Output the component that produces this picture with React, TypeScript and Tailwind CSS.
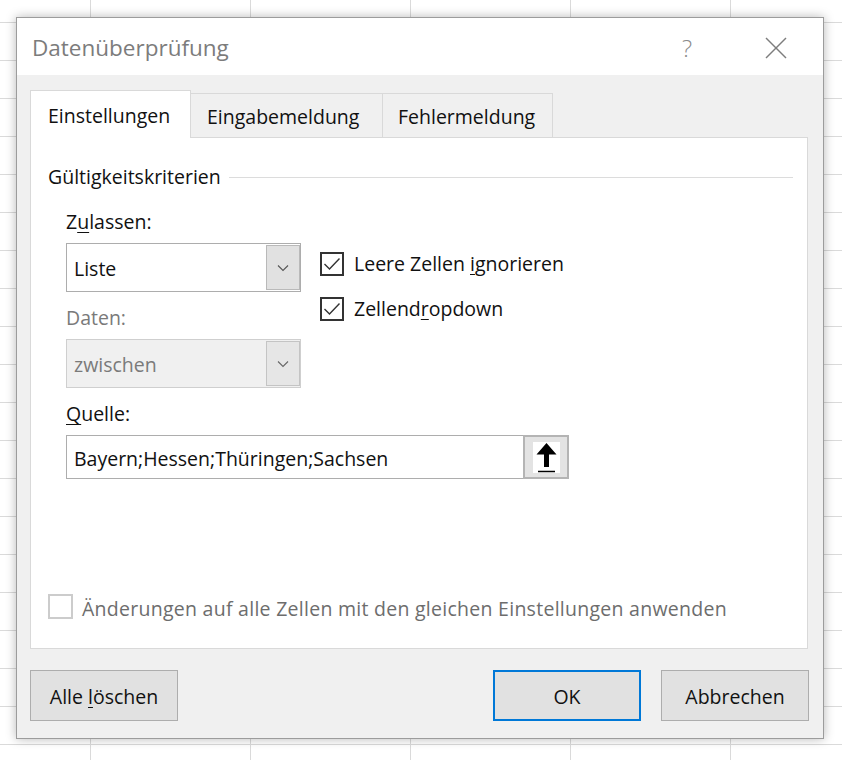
import React from "react";

function Chevron({ color = "#555" }: { color?: string }) {
  return (
    <svg width="12" height="8" viewBox="0 0 12 8">
      <polyline points="1,1.5 6,6.5 11,1.5" fill="none" stroke={color} strokeWidth="1.1" />
    </svg>
  );
}

function Combo({ value, disabled }: { value: string; disabled?: boolean }) {
  return (
    <div
      className={`flex h-[49px] w-[235px] items-stretch border ${
        disabled ? "border-[#cfcfcf] bg-[#f0f0f0]" : "border-[#adadad] bg-white"
      }`}
    >
      <div className={`flex flex-1 items-center pl-[7px] pt-[3px] ${disabled ? "text-[#7a7a7a]" : "text-[#111]"}`}>{value}</div>
      <div
        className={`my-[1px] flex w-[34px] items-center justify-center border ${
          disabled ? "border-[#c4c4c4] bg-[#e6e6e6]" : "border-[#b9b9b9] bg-[#e1e1e1]"
        }`}
      >
        <Chevron color={disabled ? "#666" : "#555"} />
      </div>
    </div>
  );
}

function CheckBox({ checked }: { checked: boolean }) {
  return (
    <div className="flex h-[24px] w-[24px] items-center justify-center border-2 border-[#333] bg-white">
      {checked && (
        <svg width="20" height="20" viewBox="0 0 20 20">
          <polyline points="2.5,10 7.5,15 17.5,4.5" fill="none" stroke="#333" strokeWidth="1.4" />
        </svg>
      )}
    </div>
  );
}

export default function App() {
  return (
    <div className="relative h-[760px] w-[842px] overflow-hidden bg-white font-['Open_Sans',sans-serif] text-[19.5px] [background-image:linear-gradient(to_right,#dadada_1px,transparent_1px),linear-gradient(to_bottom,#dadada_1px,transparent_1px)] [background-position:90px_22px] [background-size:160px_38px]">
      <div className="absolute left-[16px] top-[17px] flex h-[722px] w-[808px] flex-col border border-[#9c9c9c] bg-[#f0f0f0] shadow-[0_0_10px_rgba(0,0,0,0.28)]">
        {/* Title bar */}
        <div className="flex h-[57px] items-center bg-white pl-[15px] pt-[2px] text-[#7c7c7c]">
          <span className="text-[22.5px]">Datenüberprüfung</span>
          <span className="ml-auto text-[24px] font-light text-[#8a8a8a]">?</span>
          <svg className="ml-[73px] mr-[36px]" width="22" height="22" viewBox="0 0 22 22">
            <line x1="1" y1="1" x2="21" y2="21" stroke="#7d7d7d" strokeWidth="1.4" />
            <line x1="21" y1="1" x2="1" y2="21" stroke="#7d7d7d" strokeWidth="1.4" />
          </svg>
        </div>

        {/* Tabs + panel */}
        <div className="pl-[13px] pr-[15px] pt-[15px]">
          <div className="flex h-[47px] items-end">
            <div className="relative z-10 -mb-px flex h-[48px] w-[161px] items-center border border-b-0 border-[#d9d9d9] bg-white pl-[17px] pt-[2px] text-[#111]">
              Einstellungen
            </div>
            <div className="flex h-[44px] w-[192px] items-center border-r border-t border-[#d9d9d9] pl-[16px] pt-[2px] text-[#111]">
              Eingabemeldung
            </div>
            <div className="flex h-[44px] w-[170px] items-center border-r border-t border-[#d9d9d9] pl-[15px] pt-[2px] text-[#111]">
              Fehlermeldung
            </div>
          </div>
          <div className="flex h-[512px] flex-col border border-[#d9d9d9] bg-white pl-[17px] pr-[14px] pt-[26px]">
            <div className="flex h-[26px] items-center text-[#111]">
              <span>Gültigkeitskriterien</span>
              <div className="ml-[8px] h-px flex-1 bg-[#dcdcdc]" />
            </div>

            <div className="mt-[19px] flex pl-[18px]">
              <div className="flex w-[235px] flex-col">
                <div className="flex h-[26px] items-center text-[#111]">
                  <span>
                    Z<u className="underline-offset-[3px]">u</u>lassen:
                  </span>
                </div>
                <div className="mt-[8px]">
                  <Combo value="Liste" />
                </div>
                <div className="mt-[13px] flex h-[26px] items-center text-[#7a7a7a]">Daten:</div>
                <div className="mt-[8px]">
                  <Combo value="zwischen" disabled />
                </div>
              </div>
              <div className="ml-[19px] flex flex-col pt-[43px]">
                <div className="flex h-[24px] items-center">
                  <CheckBox checked />
                  <span className="ml-[10px] text-[#111]">
                    Leere Zellen <u className="underline-offset-[3px]">i</u>gnorieren
                  </span>
                </div>
                <div className="mt-[21px] flex h-[24px] items-center">
                  <CheckBox checked />
                  <span className="ml-[10px] text-[#111]">
                    Zellend<u className="underline-offset-[3px]">r</u>opdown
                  </span>
                </div>
              </div>
            </div>

            <div className="mt-[12px] flex h-[26px] items-center pl-[18px] pt-[1px] text-[#111]">
              <span>
                <u className="underline-offset-[3px]">Q</u>uelle:
              </span>
            </div>
            <div className="ml-[18px] mt-[9px] flex h-[44px] w-[503px] border border-[#adadad] bg-white">
              <div className="flex flex-1 items-center pl-[7px] pt-[3px] text-[#111]">Bayern;Hessen;Thüringen;Sachsen</div>
              <div className="-my-px -mr-px flex w-[46px] items-center justify-center border-2 border-[#b4b4b4] bg-[#e3e3e3]">
                <div className="flex h-[31px] w-[27px] items-center justify-center bg-white">
                  <svg width="27" height="31" viewBox="0 0 27 31">
                    <polygon points="13.5,1 3.5,12.5 11,12.5 11,25 16,25 16,12.5 23.5,12.5" fill="#000" />
                    <line x1="5" y1="29.5" x2="22" y2="29.5" stroke="#000" strokeWidth="1.5" />
                  </svg>
                </div>
              </div>
            </div>

            <div className="mb-[25px] mt-auto flex items-center">
              <div className="h-[25px] w-[25px] border-2 border-[#cccccc] bg-white" />
              <span className="ml-[9px] pt-[3px] tracking-[0.27px] text-[#6d6d6d]">
                Änderungen auf alle Zellen mit den gleichen Einstellungen anwenden
              </span>
            </div>
          </div>
        </div>

        {/* Buttons */}
        <div className="mt-[21px] flex pl-[13px] pr-[14px] text-[#111]">
          <div className="flex h-[51px] w-[148px] items-center justify-center border border-[#adadad] bg-[#e1e1e1] pt-[3px]">
            <span>
              Alle <u className="underline-offset-[3px]">l</u>öschen
            </span>
          </div>
          <div className="ml-auto flex h-[51px] w-[148px] items-center justify-center border-2 border-[#0078d7] bg-[#e1e1e1] pt-[3px]">
            OK
          </div>
          <div className="ml-[20px] flex h-[51px] w-[148px] items-center justify-center border border-[#adadad] bg-[#e1e1e1] pt-[3px]">
            Abbrechen
          </div>
        </div>
      </div>
    </div>
  );
}
